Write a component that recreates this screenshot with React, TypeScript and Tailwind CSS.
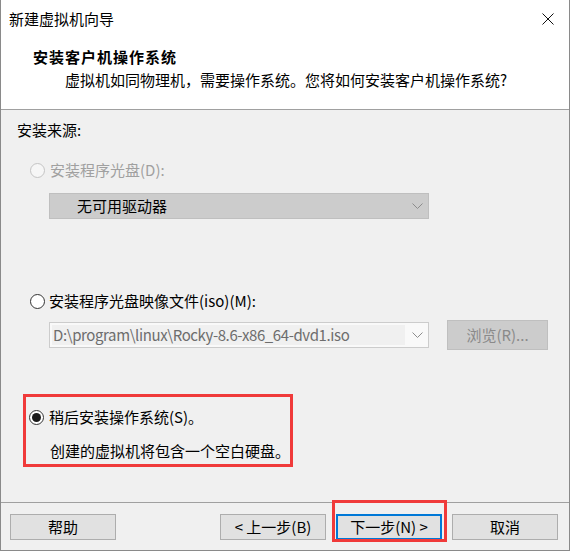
import React from "react";

function Radio({ checked, disabled }: { checked?: boolean; disabled?: boolean }) {
  return (
    <span
      className={
        disabled
          ? "w-[15px] h-[15px] rounded-full border border-[#c4c4c4] bg-[#f6f6f6] flex items-center justify-center shrink-0"
          : "w-[15px] h-[15px] rounded-full border border-[#333333] bg-white flex items-center justify-center shrink-0"
      }
    >
      {checked && <span className="w-[9px] h-[9px] rounded-full bg-[#1a1a1a]" />}
    </span>
  );
}

function Chevron() {
  return (
    <svg width="11" height="7" viewBox="0 0 11 7" className="shrink-0">
      <polyline points="0.5,0.5 5.5,5.5 10.5,0.5" fill="none" stroke="#8c8c8c" strokeWidth="1" />
    </svg>
  );
}

export default function App() {
  return (
    <div className="w-[570px] h-[551px] border-x border-b border-[#8a8a8a] bg-[#f0f0f0] flex flex-col relative font-['Noto_Sans_CJK_SC','Noto_Sans',sans-serif] text-[15px] text-black">
      <div className="h-[110px] bg-white border-b border-[#a0a0a0] shrink-0">
        <div className="h-[38px] flex items-center justify-between pl-[8px] pr-[15px]">
          <span className="leading-[20px]">新建虚拟机向导</span>
          <svg width="12" height="12" viewBox="0 0 12 12">
            <path d="M0.5 0.5 L11.5 11.5 M11.5 0.5 L0.5 11.5" stroke="#111" strokeWidth="1" fill="none" />
          </svg>
        </div>
        <div className="pt-[8px] pl-[32px] font-bold leading-[22px] tracking-[1px]">安装客户机操作系统</div>
        <div className="mt-[1px] pl-[64px] leading-[22px]">
          虚拟机如同物理机，需要操作系统。您将如何安装客户机操作系统?
        </div>
      </div>

      <div className="h-[392px] shrink-0 flex flex-col">
        <div className="pt-[10px] pl-[16px] leading-[20px]">安装来源:</div>

        <div className="mt-[20px] ml-[29px] flex items-center gap-[5px] h-[20px] leading-[20px] text-[#a0a0a0]">
          <Radio disabled />
          <span>安装程序光盘(D):</span>
        </div>

        <div className="mt-[13px] ml-[48px] w-[380px] h-[26px] bg-[#cccccc] border border-[#bfbfbf] flex items-center justify-between pl-[27px] pr-[5px] leading-[20px]">
          <span>无可用驱动器</span>
          <Chevron />
        </div>

        <div className="mt-[72px] ml-[29px] flex items-center gap-[4px] h-[20px] leading-[20px]">
          <Radio />
          <span>安装程序光盘映像文件(iso)(M):</span>
        </div>

        <div className="mt-[9px] ml-[48px] flex items-center h-[30px]">
          <div className="w-[380px] h-[26px] border border-[#cccccc] bg-[#f9f9f9] flex items-center pl-[2px] pr-[5px] justify-between">
            <div className="w-[353px] h-[20px] bg-[#f0f0f0] text-[#6d6d6d] leading-[20px] pl-[1px] tracking-[-0.4px] whitespace-nowrap overflow-hidden">
              D:\program\linux\Rocky-8.6-x86_64-dvd1.iso
            </div>
            <Chevron />
          </div>
          <div className="ml-[18px] w-[101px] h-[30px] bg-[#cccccc] border border-[#bfbfbf] text-[#8a8a8a] flex items-center justify-center leading-[20px]">
            浏览(R)...
          </div>
        </div>

        <div className="mt-[44px] ml-[22px] w-[270px] h-[73px] border-[3px] border-[#f03a3a]">
          <div className="mt-[10px] ml-[3px] flex items-center gap-[5px] h-[20px] leading-[20px]">
            <Radio checked />
            <span>稍后安装操作系统(S)。</span>
          </div>
          <div className="mt-[14px] ml-[24px] leading-[20px]">创建的虚拟机将包含一个空白硬盘。</div>
        </div>
      </div>

      <div className="flex-1 border-t border-[#a0a0a0] pt-[11px] pl-[9px] pr-[11px] flex items-start">
        <div className="w-[106px] h-[26px] bg-[#e1e1e1] border border-[#adadad] flex items-center justify-center leading-[20px]">
          帮助
        </div>
        <div className="flex-1" />
        <div className="flex gap-[10px]">
          <div className="w-[106px] h-[26px] bg-[#e1e1e1] border border-[#adadad] flex items-center justify-center leading-[20px]">
            &lt; 上一步(B)
          </div>
          <div className="w-[106px] h-[26px] bg-[#e1e1e1] border-2 border-[#0078d7] flex items-center justify-center leading-[20px]">
            下一步(N) &gt;
          </div>
          <div className="w-[106px] h-[26px] bg-[#e1e1e1] border border-[#adadad] flex items-center justify-center leading-[20px]">
            取消
          </div>
        </div>
      </div>

      <div className="absolute left-[331px] top-[500px] w-[115px] h-[42px] border-[3px] border-[#f03a3a]" />
    </div>
  );
}
